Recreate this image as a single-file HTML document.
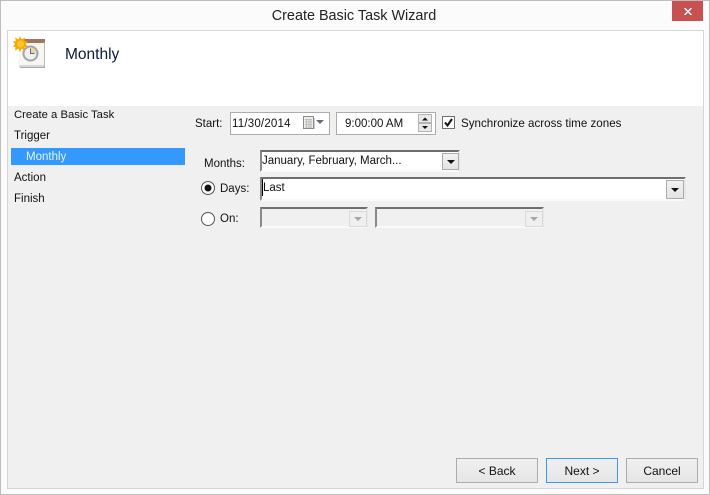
<!DOCTYPE html>
<html><head><meta charset="utf-8"><style>
html,body{margin:0;padding:0;width:710px;height:495px;overflow:hidden;background:#fbfbfb}
body{position:relative;font-family:"Liberation Sans",sans-serif;font-size:12px;color:#111}
div,span{position:absolute;box-sizing:border-box;white-space:nowrap}
.t{line-height:15px;height:15px;font-size:11.5px}
.cb{background:#fff;border:2px solid #dfdfdf;border-top:2px solid #6e6e6e;border-left:2px solid #8a8a8a;border-right-color:#e8e8e8;border-bottom-color:#fafafa}
.ar{background:linear-gradient(#f2f2f2,#e4e4e4);border:1px solid #acacac}
.ar:after{content:"";position:absolute;left:50%;top:50%;margin:-2px 0 0 -4px;border:4px solid transparent;border-top:4px solid #111;border-bottom:0}
.dis{background:#f0f0f0}
.dis .ar{background:#efefef;border-color:#d9d9d9}
.dis .ar:after{border-top-color:#a6a6a6}
.b{height:25px;top:458px;border:1px solid #acacac;background:linear-gradient(#f0f0f0,#e5e5e5);text-align:center;line-height:24px;font-size:12px}
</style></head><body>
<div style="left:0;top:0;width:710px;height:495px;border:1px solid #bdbdbd"></div>
<div style="left:-1px;top:8px;width:710px;text-align:center;font-size:14.4px;line-height:16px;color:#222">Create Basic Task Wizard</div>
<div style="left:672px;top:1px;width:31px;height:20px;background:#c75050"></div>
<svg style="position:absolute;left:684px;top:8px" width="8" height="7" viewBox="0 0 8 7"><path d="M.5 0L7.500 7M7.500 0L.5 7" stroke="#fff" stroke-width="1.500" fill="none"/></svg>

<div style="left:7px;top:30px;width:697px;height:459px;border:1px solid #d6d6d6;background:#f0f0f0"></div>
<div style="left:8px;top:31px;width:695px;height:75px;background:#fff"></div>

<svg style="position:absolute;left:13px;top:36px" width="34" height="34" viewBox="0 0 34 34">
<rect x="7" y="8" width="25" height="24" fill="#a9a9a9"/>
<path d="M6 29H31V31H6Z" fill="#d8d8d8"/>
<rect x="6" y="6" width="25" height="23" fill="#f7f6f0"/>
<rect x="8" y="3" width="24" height="4" fill="#a5745c"/>
<rect x="31" y="6" width="1" height="24" fill="#b8b8b8"/>
<circle cx="17.500" cy="17.500" r="8" fill="#9fa5ab"/>
<circle cx="17.500" cy="17.500" r="6" fill="#eef0f2"/>
<path d="M17.500 17.500V11.500A6 6 0 0 1 23.500 17.500Z" fill="#f0d6a0"/>
<path d="M17.500 12.500V17.500H21.500" stroke="#667" fill="none"/>
<path d="M7 0L8.500 3.500L12 1.500L11.500 5L15 5.500L12.500 8L15 10.500L11.500 11L12 14.500L8.500 12.500L7 16L5.500 12.500L2 14.500L2.500 11L0 10.500L2 8L0 5.500L3 5L2 1.500L5.500 3.500Z" fill="#f7a800"/>
<circle cx="7.500" cy="8" r="3.500" fill="#ffc828"/>
</svg>
<div style="left:65px;top:46px;font-size:15.5px;line-height:18px;color:#0a1a38">Monthly</div>

<div class="t" style="left:14px;top:108px;font-size:11.3px">Create a Basic Task</div>
<div class="t" style="left:14px;top:129px;">Trigger</div>
<div style="left:11px;top:148px;width:174px;height:17px;background:#3399ff"></div>
<div class="t" style="left:26px;top:150px;color:#eaf4ff">Monthly</div>
<div class="t" style="left:14px;top:171px;">Action</div>
<div class="t" style="left:14px;top:192px;">Finish</div>

<div class="t" style="left:195px;top:117px;">Start:</div>
<div style="left:230px;top:112px;width:100px;height:23px;background:#fff;border:1px solid #acacac"></div>
<div class="t" style="left:232px;top:117px;letter-spacing:.2px">11/30/2014</div>
<svg style="position:absolute;left:303px;top:116px" width="24" height="14" viewBox="0 0 24 14"><rect x=".5" y=".5" width="10" height="12" fill="#eee" stroke="#8a8a8a"/><path d="M2 3.500H9M2 6H9M2 8.500H9M2 11H9M3.500 3V12M6 3V12M8 3V12" stroke="#b4b4b4" stroke-width=".8"/><rect x="11" y="2" width="1" height="11" fill="#d0d0d0"/><path d="M13 4H21L17 8Z" fill="#5d6b85"/></svg>

<div style="left:336px;top:112px;width:100px;height:23px;background:#fff;border:1px solid #acacac"></div>
<div class="t" style="left:345px;top:117px;">9:00:00 AM</div>
<div style="left:418px;top:114px;width:14px;height:9px;background:#e9e9e9;border:1px solid #b4b4b4"></div>
<div style="left:418px;top:123px;width:14px;height:9px;background:#e9e9e9;border:1px solid #b4b4b4"></div>
<svg style="position:absolute;left:418px;top:114px" width="14" height="18"><path d="M4 6.500H10L7 3.500ZM4 12H10L7 15Z" fill="#111"/></svg>

<div style="left:442px;top:116px;width:13px;height:13px;background:#fff;border:1px solid #707070"></div>
<svg style="position:absolute;left:442px;top:116px" width="13" height="13"><path d="M3 6.500L5.500 9.500L10 3" stroke="#111" stroke-width="2" fill="none"/></svg>
<div class="t" style="left:461px;top:116px;font-size:11.6px">Synchronize across time zones</div>

<div class="t" style="left:204px;top:157px;">Months:</div>
<div class="cb" style="left:260px;top:150px;width:200px;height:22px"></div>
<div class="t" style="left:262px;top:154px;">January, February, March...</div>
<div class="ar" style="left:442px;top:153px;width:17px;height:17px"></div>

<svg style="position:absolute;left:201px;top:181px" width="14" height="14"><circle cx="7" cy="7" r="6.500" fill="#fff" stroke="#555"/><circle cx="7" cy="7" r="3.500" fill="#111"/></svg>
<div class="t" style="left:220px;top:182px;">Days:</div>
<div class="cb" style="left:260px;top:177px;width:426px;height:24px"></div>
<div style="left:262px;top:179px;width:1px;height:17px;background:#000"></div>
<div class="t" style="left:263px;top:181px;">Last</div>
<div class="ar" style="left:666px;top:180px;width:18px;height:19px"></div>

<svg style="position:absolute;left:201px;top:212px" width="14" height="14"><circle cx="7" cy="7" r="6.500" fill="#fff" stroke="#555"/></svg>
<div class="t" style="left:220px;top:212px;">On:</div>
<div class="cb dis" style="left:260px;top:207px;width:108px;height:21px"><div class="ar" style="left:87px;top:2px;width:18px;height:16px"></div></div>
<div class="cb dis" style="left:375px;top:207px;width:169px;height:21px"><div class="ar" style="left:148px;top:2px;width:18px;height:16px"></div></div>

<div class="b" style="left:456px;width:82px">&lt; Back</div>
<div class="b" style="left:546px;width:72px;border-color:#3d96f0">Next &gt;</div>
<div class="b" style="left:626px;width:72px">Cancel</div>
</body></html>
